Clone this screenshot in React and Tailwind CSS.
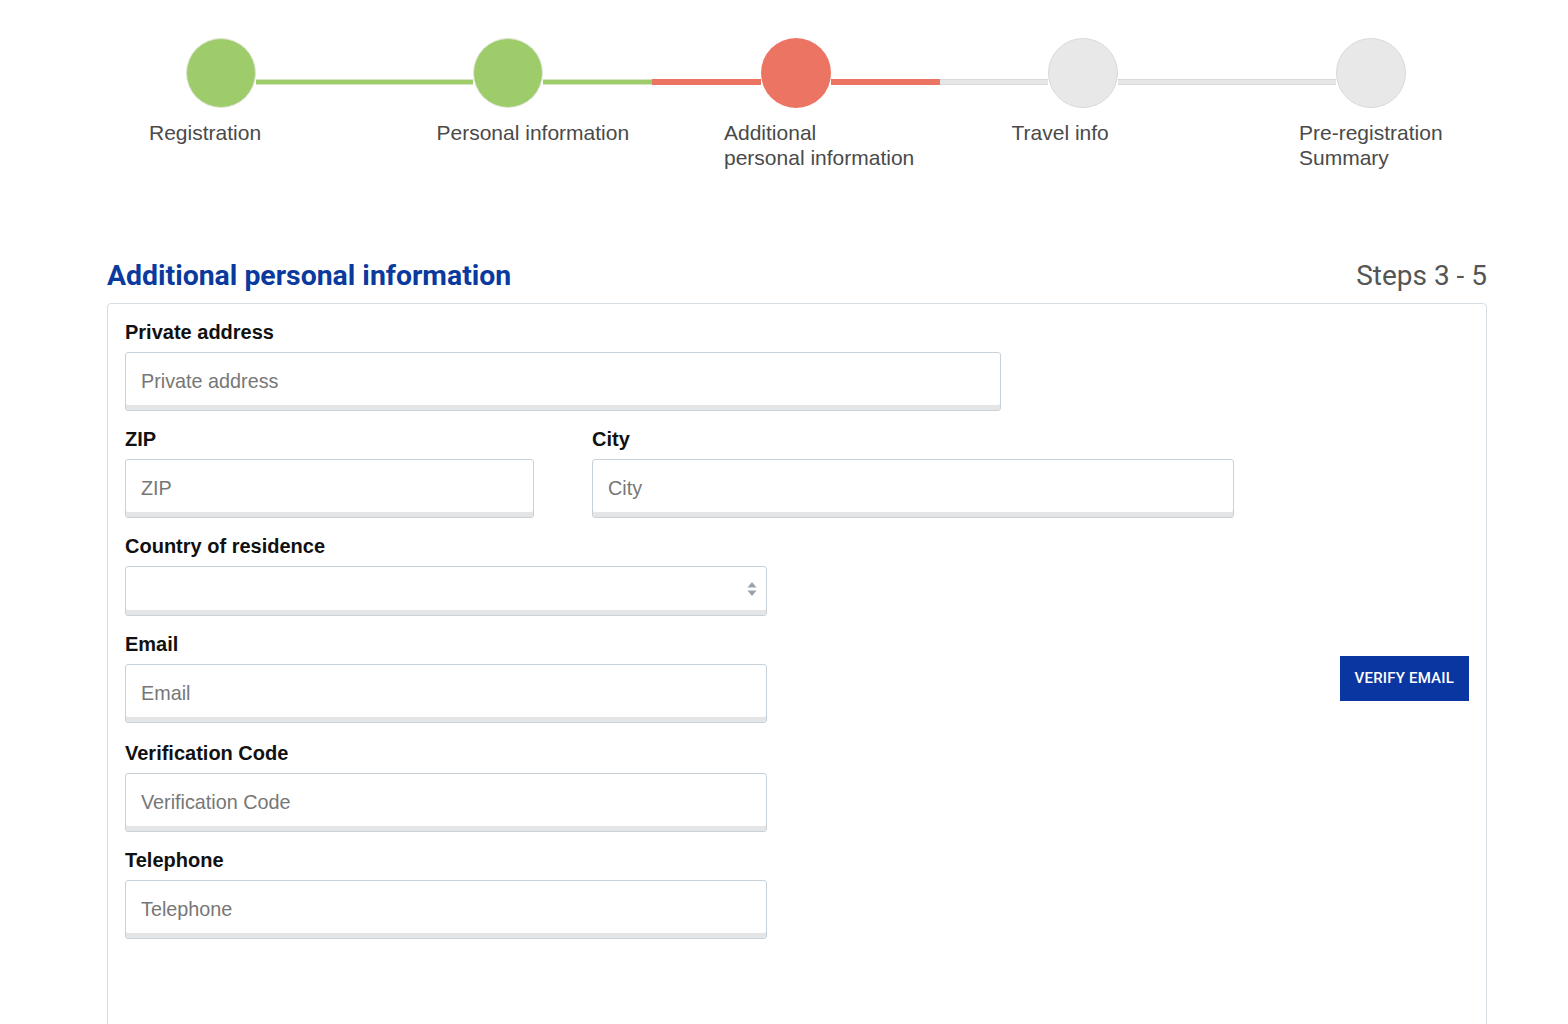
import React from 'react';

const steps = [
    { label: 'Registration', status: 'done' },
    { label: 'Personal information', status: 'done' },
    { label: 'Additional\npersonal information', status: 'current' },
    { label: 'Travel info', status: 'todo' },
    { label: 'Pre-registration\nSummary', status: 'todo' },
];

const lineClass = {
    done: 'bg-[#9fcc6b] border-y border-[#d6e6c4]',
    current: 'bg-[#ec7462]',
    todo: 'bg-[#e6e6e6] border-y border-[#dadada]',
};

const circleClass = {
    done: 'bg-[#9fcc6b] border border-[#dfe6d6]',
    current: 'bg-[#ec7462]',
    todo: 'bg-[#e8e8e8] border border-[#d9d9d9]',
};

function Stepper() {
    return (
        <div className="flex pl-[77px] pt-[38px]">
            {steps.map((step, i) => (
                <div key={step.label} className="w-[287.5px] shrink-0">
                    <div className="flex items-start">
                        <div
                            className={
                                'flex-1 h-[6px] mt-[41px] ' +
                                (i === 0 ? 'bg-transparent' : lineClass[step.status])
                            }
                        />
                        <div className={'w-[70px] h-[70px] rounded-full shrink-0 box-border ' + circleClass[step.status]} />
                        <div
                            className={
                                'flex-1 h-[6px] mt-[41px] ' +
                                (i === steps.length - 1 ? 'bg-transparent' : lineClass[step.status])
                            }
                        />
                    </div>
                    <p className="mt-[12px] ml-[72px] text-[21px] leading-[25px] text-[#4a4a4a] whitespace-pre-line font-['Liberation_Sans',Arial,sans-serif]">
                        {step.label}
                    </p>
                </div>
            ))}
        </div>
    );
}

function Field({ label, placeholder, className = '' }) {
    return (
        <div className={className}>
            <label className="block text-[20px] leading-[24px] font-bold text-[#111] mb-[8px]">{label}</label>
            <div className="h-[59px] border border-[#c9d1d8] rounded-[3px] shadow-[inset_0_-5px_0_#e3e5e7] flex items-center px-[15px]">
                <span className="text-[19.8px] text-[#777]">{placeholder}</span>
            </div>
        </div>
    );
}

export default function App() {
    return (
        <div className="min-h-screen bg-white font-['Liberation_Sans',Arial,sans-serif] overflow-hidden">
            <Stepper />

            <div className="ml-[107px] w-[1380px] mt-[89px]">
                <div className="flex items-end justify-between h-[34px] font-['Roboto',sans-serif]">
                    <h1 className="text-[28.4px] leading-[34px] font-bold text-[#0b3a9e]">Additional personal information</h1>
                    <span className="text-[28px] leading-[34px] text-[#555]">Steps 3 - 5</span>
                </div>

                <div className="mt-[10px] border border-[#d6dee4] rounded-[4px] pt-[16px] px-[17px] pb-[130px]">
                    <Field label="Private address" placeholder="Private address" className="w-[876px]" />

                    <div className="flex gap-[58px] mt-[16px]">
                        <Field label="ZIP" placeholder="ZIP" className="w-[409px]" />
                        <Field label="City" placeholder="City" className="w-[642px]" />
                    </div>

                    <div className="w-[642px] mt-[16px]">
                        <label className="block text-[20px] leading-[24px] font-bold text-[#111] mb-[8px]">Country of residence</label>
                        <div className="h-[50px] border border-[#c9d1d8] rounded-[3px] shadow-[inset_0_-5px_0_#e3e5e7] flex items-center justify-end pr-[9px] pb-[4px]">
                            <svg width="10" height="16" viewBox="0 0 10 16">
                                <path d="M5 1 L9.5 6.5 L0.5 6.5 Z" fill="#97a3ad" />
                                <path d="M0.5 9.5 L9.5 9.5 L5 15 Z" fill="#97a3ad" />
                            </svg>
                        </div>
                    </div>

                    <div className="flex items-center justify-between mt-[16px]">
                        <Field label="Email" placeholder="Email" className="w-[642px]" />
                        <button className="h-[45px] px-[15px] mt-[2px] bg-[#0a36a1] text-white text-[15px] font-medium font-['Roboto',sans-serif] tracking-[0.2px]">
                            VERIFY EMAIL
                        </button>
                    </div>

                    <Field label="Verification Code" placeholder="Verification Code" className="w-[642px] mt-[18px]" />
                    <Field label="Telephone" placeholder="Telephone" className="w-[642px] mt-[16px]" />
                </div>
            </div>
        </div>
    );
}
